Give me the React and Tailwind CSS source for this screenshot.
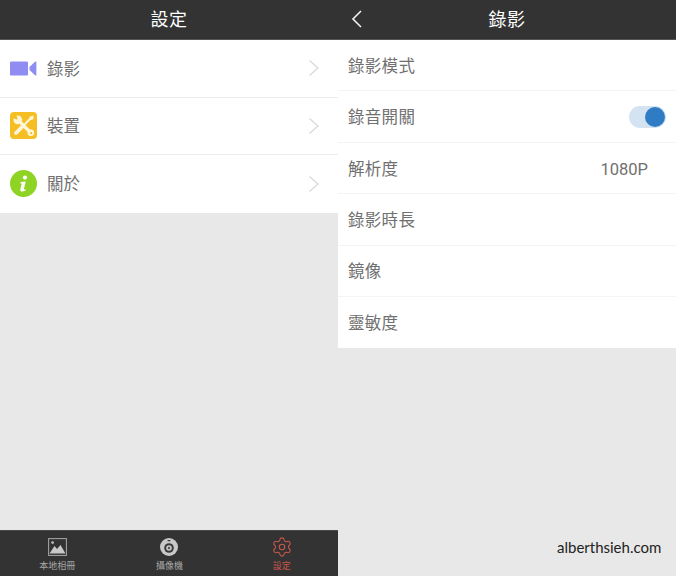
import { Settings } from "lucide-react";

const cjk = "font-['Roboto','Noto_Sans_CJK_TC',sans-serif]";

function Chevron() {
  return (
    <svg width="12" height="18" viewBox="0 0 12 18" fill="none" className="shrink-0">
      <path d="M1.5 1.5 L10 9 L1.5 16.5" stroke="#d6d6d6" strokeWidth="1.1" />
    </svg>
  );
}

function VideoIcon() {
  return (
    <svg width="27" height="15" viewBox="0 0 27 15">
      <rect x="0" y="0.5" width="18" height="14" rx="1.2" fill="#8f8cf2" />
      <path d="M19.5 6 L25 0.8 Q26.4 0 26.4 1.5 V13.5 Q26.4 15 25 14.2 L19.5 9 Z" fill="#8f8cf2" />
    </svg>
  );
}

function ToolsIcon() {
  return (
    <svg width="27" height="27" viewBox="0 0 27 27">
      <rect width="27" height="27" rx="4" fill="#f5be24" />
      <path d="M21 6 L13 14" stroke="#fff6da" strokeWidth="2" />
      <path d="M13 14 L6 21" stroke="#fff6da" strokeWidth="3.8" strokeLinecap="round" />
      <path d="M20 4.5 L23.5 3.5 L23.5 7 L21.5 8 L19 6.5 Z" fill="#fff6da" />
      <path d="M8 8 L20.5 20.5" stroke="#fff6da" strokeWidth="3.2" />
      <circle cx="7.8" cy="7.8" r="4.4" fill="#fff6da" />
      <path d="M7.8 7.8 L2 6 L6 2 Z" fill="#f5be24" />
      <circle cx="20.8" cy="20.8" r="3.3" fill="#fff6da" />
      <circle cx="21.2" cy="21.2" r="1.1" fill="#f5be24" />
    </svg>
  );
}

function InfoIcon() {
  return (
    <svg width="27" height="27" viewBox="0 0 27 27">
      <circle cx="13.5" cy="13.5" r="13.5" fill="#8fd324" />
      <circle cx="15" cy="7.6" r="2.1" fill="#fff" />
      <path d="M10.5 12 L15.8 11.4 L13.8 19.2 Q13.6 20 15.6 19.2 L15.6 20.4 Q13 21.8 11.2 21.4 Q9.8 21 10.4 19 L11.8 13.6 L10.4 13.4 Z" fill="#fff" />
    </svg>
  );
}

function ImageIcon() {
  return (
    <svg width="19" height="18" viewBox="0 0 19 18" fill="none">
      <rect x="0.6" y="0.6" width="17.8" height="16.8" stroke="#a8a8a8" strokeWidth="1" />
      <circle cx="4.6" cy="4.6" r="1.4" fill="#bdbdbd" />
      <path d="M1.5 15.5 L6.5 8 L9 11 L12.5 7 L17.5 15.5 Z" fill="#c8c8c8" />
    </svg>
  );
}

function CameraIcon() {
  return (
    <svg width="18" height="18" viewBox="0 0 18 18">
      <circle cx="9" cy="9" r="9" fill="#c8c8c8" />
      <circle cx="9" cy="10" r="4.8" fill="#3a3a3a" />
      <circle cx="9" cy="10" r="2.8" fill="#c8c8c8" />
      <circle cx="9" cy="10" r="1.2" fill="#555" />
      <rect x="7.5" y="2" width="3" height="1.3" rx="0.6" fill="#3a3a3a" />
    </svg>
  );
}

function Header({ title, back }) {
  return (
    <header className="relative h-10 shrink-0 flex items-center justify-center bg-[#333333] border-b border-[#555555]">
      {back && (
        <svg width="12" height="18" viewBox="0 0 12 18" fill="none" className="absolute left-[13px] top-[10px]">
          <path d="M10 1 L2 9 L10 17" stroke="#f2f2f2" strokeWidth="1.6" />
        </svg>
      )}
      <span className="text-[18px] leading-none tracking-[0.4px] text-white">{title}</span>
    </header>
  );
}

function MenuRow({ icon, label }) {
  return (
    <div className="h-[57.5px] flex items-center border-b border-[#ececec] last:border-b-0 pl-[10px] pr-[18px]">
      <div className="w-[27px] flex justify-center">{icon}</div>
      <span className="ml-[10px] pt-[4px] text-[16.5px] text-[#707070] flex-1">{label}</span>
      <Chevron />
    </div>
  );
}

function SettingRow({ label, children }) {
  return (
    <div className="h-[51.4px] flex items-center justify-between border-b border-[#f4f4f4] last:border-b-0 px-[10px]">
      <span className="pt-[4px] text-[16.5px] tracking-[0.3px] text-[#707070]">{label}</span>
      {children}
    </div>
  );
}

function Tab({ icon, label, active }) {
  return (
    <div className="flex-1 flex flex-col items-center pt-[7px]">
      <div className="h-[18px] flex items-center justify-center">{icon}</div>
      <span className={`mt-[4px] text-[9px] leading-[12px] ${active ? "text-[#c9564c]" : "text-[#a8a8a8]"}`}>{label}</span>
    </div>
  );
}

export default function App() {
  return (
    <div className={`relative w-[676px] h-[576px] flex bg-[#e8e8e8] overflow-hidden ${cjk}`}>
      <section className="w-[338px] h-full flex flex-col">
        <Header title="設定" />
        <div className="bg-white">
          <MenuRow icon={<VideoIcon />} label="錄影" />
          <MenuRow icon={<ToolsIcon />} label="裝置" />
          <MenuRow icon={<InfoIcon />} label="關於" />
        </div>
        <div className="flex-1" />
        <nav className="h-[46px] flex bg-[#333333] border-t border-[#4a4a4a] pl-[1px]">
          <Tab icon={<ImageIcon />} label="本地相冊" />
          <Tab icon={<CameraIcon />} label="攝像機" />
          <Tab icon={<Settings size={22} strokeWidth={1.2} color="#c9564c" />} label="設定" active />
        </nav>
      </section>
      <section className="w-[338px] h-full flex flex-col">
        <Header title="錄影" back />
        <div className="bg-white">
          <SettingRow label="錄影模式" />
          <SettingRow label="錄音開關">
            <div className="relative w-[37px] h-[22px] rounded-full bg-[#d3e3f2]">
              <div className="absolute right-[1px] top-[1px] w-[20px] h-[20px] rounded-full bg-[#2f7cc4]" />
            </div>
          </SettingRow>
          <SettingRow label="解析度">
            <span className="pt-[4px] pr-[18px] text-[16.5px] text-[#707070]">1080P</span>
          </SettingRow>
          <SettingRow label="錄影時長" />
          <SettingRow label="鏡像" />
          <SettingRow label="靈敏度" />
        </div>
      </section>
      <span className="absolute left-[557px] top-[538px] text-[15px] leading-[18px] text-[#222] font-['Lato',sans-serif]">alberthsieh.com</span>
    </div>
  );
}
